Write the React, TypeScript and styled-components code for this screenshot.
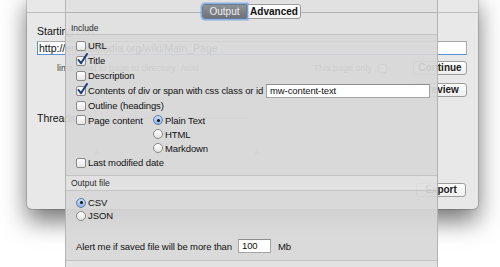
import React from "react";
import styled, { createGlobalStyle } from "styled-components";

const Global = createGlobalStyle`
  html, body { margin: 0; padding: 0; background: #fff; }
  body {
    width: 500px; height: 267px; overflow: hidden;
    font-family: "Liberation Sans", Arial, sans-serif;
    color: #111;
  }
`;

const Stage = styled.div`
  position: relative;
  width: 500px;
  height: 267px;
  overflow: hidden;
  background: #fff;
`;

/* ---------- background window ---------- */

const BackWindow = styled.div`
  position: absolute;
  left: 27px;
  top: -8px;
  width: 451px;
  height: 217px;
  box-sizing: border-box;
  background: #e8e8e8;
  border-radius: 5px;
  box-shadow: 0 12px 24px rgba(0, 0, 0, 0.55), 0 0 0 1px rgba(0, 0, 0, 0.14);
  display: flex;
  flex-direction: column;
`;

const BackHeader = styled.div`
  flex: none;
  height: 20px;
  border-bottom: 1px solid #bdbdbd;
`;

const BackBody = styled.div`
  flex: 1;
  display: flex;
  flex-direction: column;
  padding: 0 11px 12px 10px;
`;

const BackLabel = styled.div<{ $top: number }>`
  margin-top: ${(p) => p.$top}px;
  height: 12px;
  line-height: 12px;
  font-size: 10.5px;
  white-space: nowrap;
`;

const UrlField = styled.div`
  margin-top: 4px;
  height: 14px;
  box-sizing: border-box;
  background: #fff;
  border: 1px solid #a9a9a9;
  border-left-color: #5d8fd8;
  border-bottom-color: #5d8fd8;
  font-size: 10.5px;
  line-height: 12px;
  padding-left: 1px;
`;

const BackRow = styled.div<{ $top: number }>`
  margin-top: ${(p) => p.$top}px;
  height: 14px;
  display: flex;
  align-items: center;
`;

const TinyText = styled.span<{ $indent?: number }>`
  font-size: 9px;
  color: #444;
  margin-left: ${(p) => p.$indent ?? 0}px;
  white-space: nowrap;
`;

const Grow = styled.div`
  flex: 1;
`;

const EdgeGap = styled.div`
  flex: none;
  width: 1px;
`;

const SmallBox = styled.span`
  width: 9px;
  height: 9px;
  box-sizing: border-box;
  border: 1px solid #8c8c8c;
  border-radius: 2px;
  background: #fff;
  margin: 0 26px 0 6px;
`;

const PushButton = styled.div<{ $w: number }>`
  width: ${(p) => p.$w}px;
  height: 14px;
  box-sizing: border-box;
  border: 1px solid #9d9d9d;
  border-radius: 3px;
  background: linear-gradient(#ffffff, #eeeeee);
  font-size: 10px;
  line-height: 12px;
  text-align: center;
  font-weight: bold;
  color: #222;
`;

const SliderTrack = styled.div`
  margin-left: 40px;
  width: 130px;
  height: 2px;
  background: #bcbcbc;
  border-radius: 1px;
`;

const Ticks = styled.div`
  margin-top: 20px;
  display: flex;
  padding-left: 55px;
  gap: 150px;
  color: #b4b4b4;
  font-size: 10px;
`;

/* ---------- sheet ---------- */

const Sheet = styled.div`
  position: absolute;
  left: 65px;
  top: 0;
  width: 373px;
  height: 267px;
  box-sizing: border-box;
  border-left: 1px solid #b3b3b3;
  border-right: 1px solid #b3b3b3;
  background: rgba(215, 215, 215, 0.93);
  display: flex;
  flex-direction: column;
`;

const TopBand = styled.div`
  height: 34px;
  border-bottom: 1px solid #c3c3c3;
  background: rgba(255, 255, 255, 0.22);
  display: flex;
  flex-direction: column;
`;

const TabRow = styled.div`
  margin-top: 4px;
  height: 15px;
  display: flex;
`;

const TabLine = styled.div`
  flex: 1;
  height: 1px;
  margin-top: 8px;
  background: #b4b4b4;
`;

const Tab = styled.div<{ $active?: boolean; $w: number }>`
  width: ${(p) => p.$w}px;
  height: 15px;
  box-sizing: border-box;
  font-size: 10px;
  line-height: 13px;
  text-align: center;
  border: 1px solid ${(p) => (p.$active ? "#6b7a90" : "#9b9b9b")};
  border-radius: ${(p) => (p.$active ? "3px 0 0 3px" : "0 3px 3px 0")};
  background: ${(p) =>
    p.$active ? "linear-gradient(#8f9398, #6f7379)" : "linear-gradient(#ffffff, #f0f0f0)"};
  color: ${(p) => (p.$active ? "#ececec" : "#111")};
  font-weight: ${(p) => (p.$active ? "normal" : "bold")};
  box-shadow: ${(p) => (p.$active ? "0 0 0 1.5px rgba(110,160,225,0.75)" : "none")};
  position: relative;
  z-index: ${(p) => (p.$active ? 1 : 0)};
`;

const SectionTitle = styled.div`
  margin-top: 5px;
  padding-left: 5px;
  font-size: 8.5px;
  line-height: 9px;
  color: #2a2a2a;
`;

const HeaderBand = styled.div`
  height: 14px;
  border-bottom: 1px solid #c3c3c3;
  background: rgba(255, 255, 255, 0.22);
  padding-left: 5px;
  font-size: 8.5px;
  line-height: 15px;
  color: #2a2a2a;
`;

const Section = styled.div<{ $pt: number; $pb: number }>`
  padding: ${(p) => p.$pt}px 7px ${(p) => p.$pb}px 10px;
  border-bottom: 1px solid #c3c3c3;
  display: flex;
  flex-direction: column;
`;

const Row = styled.div<{ $h?: number; $top?: number }>`
  height: ${(p) => p.$h ?? 15}px;
  margin-top: ${(p) => p.$top ?? 0}px;
  display: flex;
  align-items: center;
  font-size: 9.5px;
  letter-spacing: -0.1px;
  white-space: nowrap;
`;

const BoxWrap = styled.span`
  position: relative;
  flex: none;
  width: 10px;
  height: 10px;
  margin-right: 2px;
`;

const Box = styled.span`
  display: block;
  width: 10px;
  height: 10px;
  box-sizing: border-box;
  border: 1px solid #8a8a8a;
  border-radius: 2px;
  background: linear-gradient(#ffffff, #e6e6e6);
`;

const CheckMark = styled.svg`
  position: absolute;
  left: 1px;
  top: -3px;
  width: 11px;
  height: 12px;
`;

const Radio = styled.span<{ $on?: boolean }>`
  flex: none;
  width: 10px;
  height: 10px;
  margin-right: 2px;
  box-sizing: border-box;
  border-radius: 50%;
  border: 1px solid ${(p) => (p.$on ? "#5b7fb0" : "#8a8a8a")};
  background: ${(p) =>
    p.$on ? "linear-gradient(#c9dcf5, #8fb4e6)" : "linear-gradient(#ffffff, #e4e4e4)"};
  display: flex;
  align-items: center;
  justify-content: center;
  &::after {
    content: "";
    width: 3px;
    height: 3px;
    border-radius: 50%;
    background: #111;
    display: ${(p) => (p.$on ? "block" : "none")};
  }
`;

const PageContentRow = styled.div`
  display: flex;
`;

const PageLabelCol = styled.div`
  width: 77px;
  flex: none;
`;

const RadioCol = styled.div`
  display: flex;
  flex-direction: column;
`;

const TextField = styled.div<{ $w: number; $gap?: number }>`
  width: ${(p) => p.$w}px;
  height: 14px;
  margin-left: ${(p) => p.$gap ?? 0}px;
  box-sizing: border-box;
  background: #fff;
  border: 1px solid #a4a4a4;
  border-top-color: #8e8e8e;
  font-size: 9.5px;
  line-height: 12px;
  padding-left: 3px;
`;

const PushRight = styled.div`
  margin-left: auto;
`;

const BottomBand = styled.div`
  flex: 1;
  background: rgba(255, 255, 255, 0.22);
`;

const Unit = styled.span`
  margin-left: 7px;
`;

function Check({ checked, label }: { checked?: boolean; label: string }) {
  return (
    <>
      <BoxWrap>
        <Box />
        {checked && (
          <CheckMark viewBox="0 0 11 12">
            <path d="M1.5 7 L4 10.2 L10 1" fill="none" stroke="#1c3d75" strokeWidth="2" strokeLinecap="round" strokeLinejoin="round" />
          </CheckMark>
        )}
      </BoxWrap>
      <span>{label}</span>
    </>
  );
}

export default function App() {
  return (
    <Stage>
      <Global />
      <BackWindow>
        <BackHeader />
        <BackBody>
          <BackLabel $top={12}>Starting URL:</BackLabel>
          <UrlField>http://en.wikipedia.org/wiki/Main_Page</UrlField>
          <BackRow $top={6}>
            <TinyText $indent={20}>limit crawl to page to directory: /wiki</TinyText>
            <Grow />
            <TinyText>This page only</TinyText>
            <SmallBox />
            <PushButton $w={54}>Continue</PushButton>
          </BackRow>
          <BackRow $top={8}>
            <Grow />
            <PushButton $w={54}>Preview</PushButton>
          </BackRow>
          <BackRow $top={14}>
            <BackLabel $top={0}>Threads:</BackLabel>
            <SliderTrack />
          </BackRow>
          <Ticks>
            <span>▲</span>
            <span>▲</span>
          </Ticks>
          <Grow />
          <BackRow $top={0}>
            <Grow />
            <PushButton $w={50}>Export</PushButton>
            <EdgeGap />
          </BackRow>
        </BackBody>
      </BackWindow>

      <Sheet>
        <TopBand>
          <TabRow>
            <TabLine />
            <Tab $active $w={45}>Output</Tab>
            <Tab $w={54}>Advanced</Tab>
            <TabLine />
          </TabRow>
          <SectionTitle>Include</SectionTitle>
        </TopBand>

        <Section $pt={3} $pb={5}>
          <Row><Check label="URL" /></Row>
          <Row><Check checked label="Title" /></Row>
          <Row><Check label="Description" /></Row>
          <Row>
            <Check checked label="Contents of div or span with css class or id" />
            <PushRight>
              <TextField $w={164}>mw-content-text</TextField>
            </PushRight>
          </Row>
          <Row><Check label="Outline (headings)" /></Row>
          <PageContentRow>
            <PageLabelCol>
              <Row $h={14}><Check label="Page content" /></Row>
            </PageLabelCol>
            <RadioCol>
              <Row $h={14}><Radio $on />Plain Text</Row>
              <Row $h={14}><Radio />HTML</Row>
              <Row $h={14}><Radio />Markdown</Row>
            </RadioCol>
          </PageContentRow>
          <Row><Check label="Last modified date" /></Row>
        </Section>

        <HeaderBand>Output file</HeaderBand>

        <Section $pt={5} $pb={7}>
          <Row $h={13}><Radio $on />CSV</Row>
          <Row $h={13}><Radio />JSON</Row>
          <Row $h={14} $top={17}>
            <span>Alert me if saved file will be more than</span>
            <TextField $w={33} $gap={6}>100</TextField>
            <Unit>Mb</Unit>
          </Row>
        </Section>

        <BottomBand />
      </Sheet>
    </Stage>
  );
}
